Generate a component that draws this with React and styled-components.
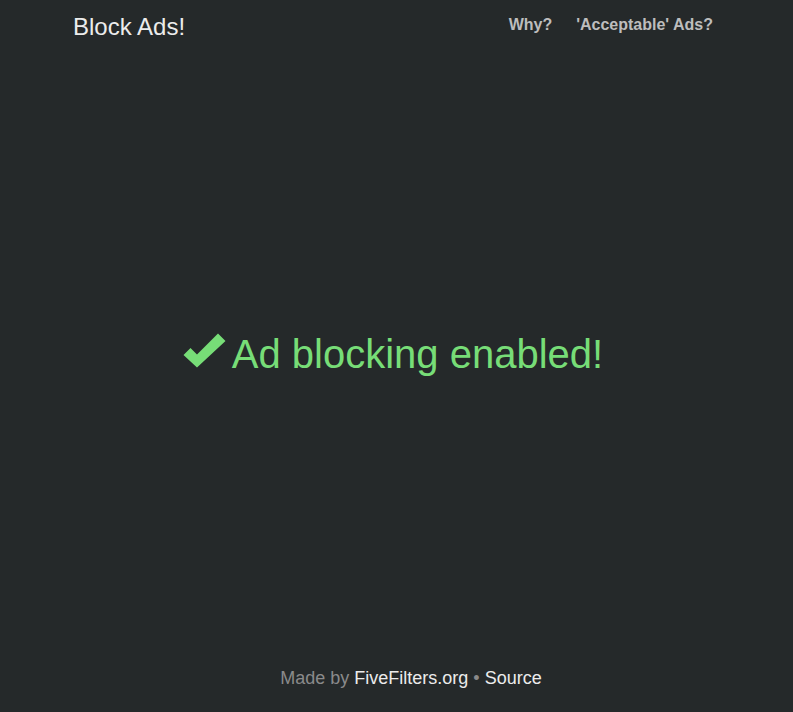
import React from "react";
import styled, { createGlobalStyle } from "styled-components";

const GlobalStyle = createGlobalStyle`
  html, body {
    margin: 0;
    padding: 0;
    background: #25292a;
  }
  body {
    font-family: "Liberation Sans", Arial, sans-serif;
    color: #e8e8e8;
  }
`;

export default function App() {
  return (
    <>
      <GlobalStyle />
      <Page>
        <Masthead>
          <Brand>Block Ads!</Brand>
          <Nav>
            <NavLink href="#">Why?</NavLink>
            <NavLink href="#">'Acceptable' Ads?</NavLink>
          </Nav>
        </Masthead>

        <Main>
          <Status>
            <Check viewBox="0 0 43 35" aria-hidden="true">
              <path d="M0.5 22 L7.5 15 L14 21.5 L35 0.5 L42.5 8 L14 34.5 Z" fill="#77dd77" />
            </Check>
            Ad blocking enabled!
          </Status>
        </Main>

        <Footer>
          <Muted>Made by </Muted>
          <FootLink href="#">FiveFilters.org</FootLink>
          <Muted> • </Muted>
          <FootLink href="#">Source</FootLink>
        </Footer>
      </Page>
    </>
  );
}

const Page = styled.div`
  height: 712px;
  display: flex;
  flex-direction: column;
  box-sizing: border-box;
`;

const Masthead = styled.header`
  width: 640px;
  margin: 0 auto;
  padding-right: 7px;
  display: flex;
  align-items: flex-start;
  justify-content: space-between;
  padding-top: 13px;
`;

const Brand = styled.h3`
  margin: 0;
  font-size: 24px;
  font-weight: 400;
  line-height: 28px;
  color: #ececec;
`;

const Nav = styled.nav`
  display: flex;
  gap: 24px;
  padding-top: 2px;
`;

const NavLink = styled.a`
  font-size: 16px;
  font-weight: 700;
  line-height: 20px;
  color: #bdbdbd;
  text-decoration: none;
`;

const Main = styled.main`
  flex: 1;
  display: flex;
  align-items: center;
  justify-content: center;
  padding-right: 7px;
`;

const Status = styled.h1`
  margin: 0;
  display: flex;
  align-items: center;
  gap: 6px;
  font-size: 40px;
  font-weight: 400;
  color: #77dd77;
`;

const Check = styled.svg`
  width: 43px;
  height: 35px;
  margin-top: -7px;
`;

const Footer = styled.footer`
  text-align: center;
  font-size: 18px;
  line-height: 22px;
  padding: 0 0 23px 29px;
`;

const Muted = styled.span`
  color: #8a8a8a;
`;

const FootLink = styled.a`
  color: #ececec;
  text-decoration: none;
`;
